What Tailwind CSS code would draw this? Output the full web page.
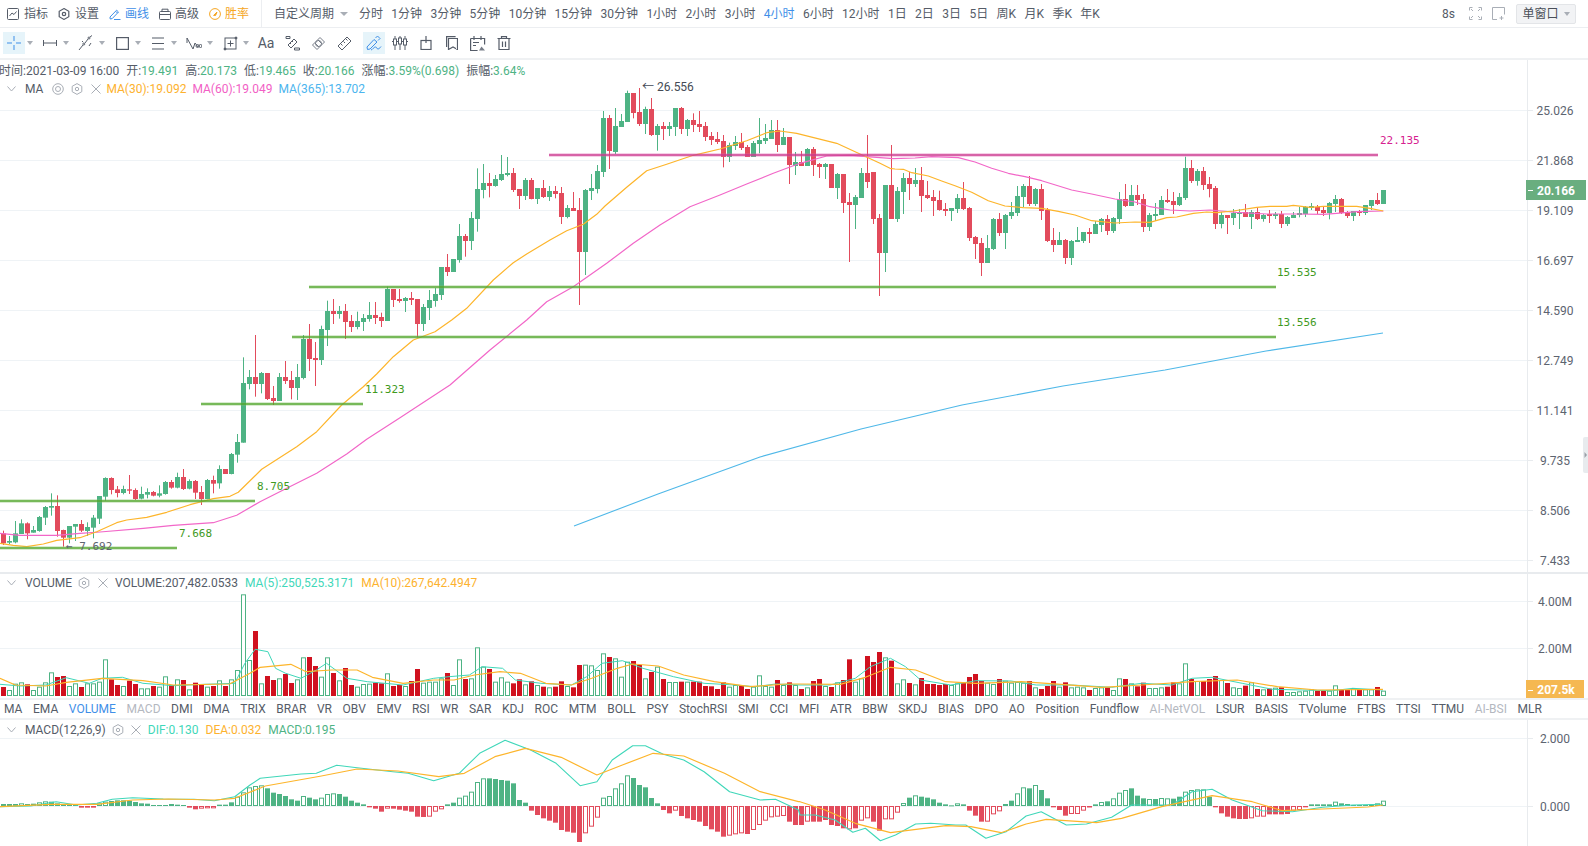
<!DOCTYPE html>
<html lang="zh">
<head>
<meta charset="UTF-8">
<title>K线图</title>
<script src="https://cdn.jsdelivr.net/npm/@tailwindcss/browser@4"></script>
</head>
<body class="bg-white">
<div class="w-[1588px] h-[846px] overflow-hidden flex flex-col text-xs text-[#555c68] font-[family-name:Roboto,'Noto_Sans_CJK_SC',sans-serif]">

  <!-- top bar -->
  <div class="h-[28px] shrink-0 flex items-center border-b border-[#eceef1] pl-[7px] pr-[12px]">
    <div class="flex items-center gap-[5px] mr-[10px]">
      <svg class="w-3 h-3" viewBox="0 0 12 12" fill="none" stroke="#555c68"><rect x=".5" y=".5" width="11" height="11" rx="1"/><path d="M2.5 8l2.5-3 2 1.5 2.5-3"/></svg>
      <span>指标</span>
    </div>
    <div class="flex items-center gap-[5px] mr-[10px]">
      <svg class="w-3 h-3" viewBox="0 0 12 12" fill="none" stroke="#555c68" stroke-width="1.2"><path d="M6 .6l4.8 2.7v5.4L6 11.4 1.2 8.7V3.3z"/><circle cx="6" cy="6" r="1.7"/></svg>
      <span>设置</span>
    </div>
    <div class="flex items-center gap-[4px] mr-[10px] text-[#3f8fe8]">
      <svg class="w-3 h-3" viewBox="0 0 12 12" fill="none" stroke="#3f8fe8"><path d="M1 9l.2 2 2-.4L9.5 4 7.6 2.2zM6.6 3.2l1.9 1.9M5 11.5h6.5"/></svg>
      <span>画线</span>
    </div>
    <div class="flex items-center gap-[4px] mr-[10px]">
      <svg class="w-3 h-3" viewBox="0 0 12 12" fill="none" stroke="#555c68"><rect x=".5" y="3.5" width="11" height="8" rx="1"/><path d="M3 3.5V1.2h6v2.3M.5 6.5h11"/></svg>
      <span>高级</span>
    </div>
    <div class="flex items-center gap-[4px] mr-[12px] text-[#f5a623]">
      <svg class="w-3 h-3" viewBox="0 0 12 12" fill="none" stroke="#f5a623"><circle cx="6" cy="6" r="5.4"/><path d="M4.6 7.4L8 4l-1.4 3.4z" fill="#f5a623"/></svg>
      <span>胜率</span>
    </div>
    <div class="h-[27px] border-l border-[#eceef1] pl-[12px] flex items-center gap-[8.4px]">
      <span>自定义周期</span>
      <span class="ml-[-2px] mr-[2px] w-0 h-0 border-x-[4px] border-x-transparent border-t-[4px] border-t-[#a9aeb6]"></span>
      <span>分时</span><span>1分钟</span><span>3分钟</span><span>5分钟</span><span>10分钟</span><span>15分钟</span><span>30分钟</span><span>1小时</span><span>2小时</span><span>3小时</span><span class="text-[#3f8fe8]">4小时</span><span>6小时</span><span>12小时</span><span>1日</span><span>2日</span><span>3日</span><span>5日</span><span>周K</span><span>月K</span><span>季K</span><span>年K</span>
    </div>
    <div class="ml-auto flex items-center">
      <span class="mr-[14px]">8s</span>
      <svg class="w-[13px] h-[13px] mr-[10px]" viewBox="0 0 13 13" fill="none" stroke="#a9aeb6"><path d="M.5 3.5v-3h3M9.5.5h3v3M12.5 9.5v3h-3M3.5 12.5h-3v-3M2 2l2 2M11 2L9 4M11 11L9 9M2 11l2-2"/></svg>
      <svg class="w-[13px] h-[13px] mr-[11px]" viewBox="0 0 13 13" fill="none" stroke="#a9aeb6"><path d="M5 12.5H.5V.5h12v7M9.5 9v4M7.5 11h4"/></svg>
      <div class="w-[60px] h-[20px] flex items-center justify-center gap-[5px] bg-[#f2f3f5] border border-[#e3e5e8] rounded-[2px] text-[#4a4f58]">
        <span>单窗口</span>
        <span class="w-0 h-0 border-x-[3px] border-x-transparent border-t-[4px] border-t-[#a9aeb6]"></span>
      </div>
    </div>
  </div>

  <!-- drawing tools -->
  <div class="h-[32px] shrink-0 flex items-center border-b-2 border-[#eff1f3] pl-[3px]">
    <div class="w-[22px] h-[22px] flex items-center justify-center bg-[#e6f4fa]">
      <svg class="w-[14px] h-[14px]" viewBox="0 0 14 14" fill="none" stroke="#3f8fe8"><path d="M7 0v5M7 9v5M0 7h5M9 7h5"/></svg>
    </div>
    <span class="ml-[2px] mr-[6px] w-0 h-0 border-x-[3px] border-x-transparent border-t-[4px] border-t-[#a9aeb6]"></span>
    <div class="w-[22px] h-[22px] flex items-center justify-center">
      <svg class="w-[14px] h-[14px]" viewBox="0 0 14 14" fill="none" stroke="#555c68"><path d="M.5 4v6M13.5 4v6M.5 7h13"/></svg>
    </div>
    <span class="ml-[2px] mr-[6px] w-0 h-0 border-x-[3px] border-x-transparent border-t-[4px] border-t-[#a9aeb6]"></span>
    <div class="w-[22px] h-[22px] flex items-center justify-center">
      <svg class="w-[16px] h-[16px]" viewBox="0 0 16 16" fill="none" stroke="#555c68"><path d="M1 15l4-5M7 8l3-4M12 2l2-1.5"/><circle cx="5.8" cy="9" r="1"/><circle cx="11" cy="3" r="1"/><path d="M4 7l1-1M11 11l2-3"/></svg>
    </div>
    <span class="ml-[2px] mr-[6px] w-0 h-0 border-x-[3px] border-x-transparent border-t-[4px] border-t-[#a9aeb6]"></span>
    <div class="w-[22px] h-[22px] flex items-center justify-center">
      <svg class="w-[13px] h-[13px]" viewBox="0 0 13 13" fill="none" stroke="#555c68" stroke-width="1.2"><rect x=".6" y=".6" width="11.8" height="11.8"/></svg>
    </div>
    <span class="ml-[2px] mr-[6px] w-0 h-0 border-x-[3px] border-x-transparent border-t-[4px] border-t-[#a9aeb6]"></span>
    <div class="w-[22px] h-[22px] flex items-center justify-center">
      <svg class="w-[14px] h-[13px]" viewBox="0 0 14 13" fill="none" stroke="#555c68" stroke-width="1.2"><path d="M1 1h12M1 6.500h12M1 12h12"/></svg>
    </div>
    <span class="ml-[2px] mr-[6px] w-0 h-0 border-x-[3px] border-x-transparent border-t-[4px] border-t-[#a9aeb6]"></span>
    <div class="w-[22px] h-[22px] flex items-center justify-center">
      <svg class="w-[16px] h-[13px]" viewBox="0 0 16 13" fill="none" stroke="#555c68"><path d="M1 1v5M1 1L7 12l2-6 3 4"/><circle cx="11.500" cy="9" r="1.500"/><circle cx="14.500" cy="9" r="1.500"/></svg>
    </div>
    <span class="ml-[2px] mr-[6px] w-0 h-0 border-x-[3px] border-x-transparent border-t-[4px] border-t-[#a9aeb6]"></span>
    <div class="w-[22px] h-[22px] flex items-center justify-center">
      <svg class="w-[15px] h-[15px]" viewBox="0 0 15 15" fill="none" stroke="#555c68"><rect x="2" y="2" width="11" height="11"/><path d="M7.500 4.500v6M4.500 7.500h6"/><circle cx="13" cy="2" r="1" fill="#555c68"/><circle cx="2" cy="13" r="1" fill="#555c68"/></svg>
    </div>
    <span class="ml-[2px] mr-[6px] w-0 h-0 border-x-[3px] border-x-transparent border-t-[4px] border-t-[#a9aeb6]"></span>
    <div class="w-[22px] h-[22px] flex items-center justify-center text-sm">Aa</div>
    <div class="ml-[4px] w-[22px] h-[22px] flex items-center justify-center">
      <svg class="w-[15px] h-[15px]" viewBox="0 0 15 15" fill="none" stroke="#555c68"><path d="M1 .5h4v2H1zM9.500 12h5v2h-5zM3 9l6-6 3 3-6 6zM5 7l1 1M7 5l1 1"/></svg>
    </div>
    <div class="ml-[4px] w-[22px] h-[22px] flex items-center justify-center">
      <svg class="w-[15px] h-[15px]" viewBox="0 0 15 15" fill="none" stroke="#777d88"><path d="M1.500 9l7.500-7.500 4.500 4.500L6 13.500zM4 7l4 4M7 4l4 4"/><circle cx="7.500" cy="7.500" r="3"/></svg>
    </div>
    <div class="ml-[4px] w-[22px] h-[22px] flex items-center justify-center">
      <svg class="w-[15px] h-[15px]" viewBox="0 0 15 15" fill="none" stroke="#555c68"><path d="M1 10l9-9 4 4-9 9zM4 8l1.500 1.500M6.500 5.500L8 7M9 3l1.500 1.500"/></svg>
    </div>
    <div class="ml-[8px] w-[22px] h-[22px] flex items-center justify-center bg-[#e6f4fa]">
      <svg class="w-[16px] h-[16px]" viewBox="0 0 16 16" fill="none" stroke="#3f8fe8"><path d="M1 12l.5 2.500 2.500-.5 7-7-3-2.500zM9.500 3l2-2 2.500 2.500-2 2M5 15c2-.5 2.500-3 4.500-3 1.500 0 1 2 2.500 2s2-1.500 3-2.500"/></svg>
    </div>
    <div class="ml-[4px] w-[22px] h-[22px] flex items-center justify-center">
      <svg class="w-[16px] h-[14px]" viewBox="0 0 16 14" fill="none" stroke="#555c68"><path d="M0 5.500h16M3 0v14M8 0v14M13 0v14"/><rect x="1.500" y="3" width="3" height="6" fill="#fff"/><rect x="6.500" y="2" width="3" height="6" fill="#fff"/><rect x="11.500" y="3" width="3" height="6" fill="#fff"/></svg>
    </div>
    <div class="ml-[4px] w-[22px] h-[22px] flex items-center justify-center">
      <svg class="w-[12px] h-[14px]" viewBox="0 0 12 14" fill="none" stroke="#555c68" stroke-width="1.2"><rect x="1" y="4.500" width="10" height="9"/><path d="M6 0v7"/></svg>
    </div>
    <div class="ml-[4px] w-[22px] h-[22px] flex items-center justify-center">
      <svg class="w-[12px] h-[14px]" viewBox="0 0 12 14" fill="none" stroke="#555c68" stroke-width="1.2"><path d="M2.500 2.500h9V13.500L7 11l-4.500 2.500zM2.500 2.500v11M.6 11V.6h9"/></svg>
    </div>
    <div class="ml-[4px] w-[22px] h-[22px] flex items-center justify-center">
      <svg class="w-[16px] h-[15px]" viewBox="0 0 16 15" fill="none" stroke="#555c68" stroke-width="1.2"><path d="M4 0v4M11 0v4M.6 2.500h14v6M.6 2.500v12h7M3 6.500h6M3 9.500h3"/><path d="M9 14.500l2.500-4 3.500 4z" fill="#777d88" stroke="none"/></svg>
    </div>
    <div class="ml-[4px] w-[22px] h-[22px] flex items-center justify-center">
      <svg class="w-[14px] h-[14px]" viewBox="0 0 14 14" fill="none" stroke="#555c68" stroke-width="1.2"><path d="M.5 2.500h13M4.500 2.500V.6h5v1.900M2 2.500v11h10v-11M5.500 5.500v5.500M8.500 5.500v5.500"/></svg>
    </div>
  </div>

  <!-- price chart -->
  <div class="relative h-[514px] shrink-0 border-b-2 border-[#e8ebee]">
    <svg id="main" class="block" width="1588" height="512"></svg>
    <div class="absolute left-[-1px] top-[2px] h-[18px] flex items-center whitespace-nowrap">
      <span>时间:2021-03-09 16:00</span>
      <span class="ml-[7px]">开:<span class="text-[#4eb384]">19.491</span></span>
      <span class="ml-[7px]">高:<span class="text-[#4eb384]">20.173</span></span>
      <span class="ml-[7px]">低:<span class="text-[#4eb384]">19.465</span></span>
      <span class="ml-[7px]">收:<span class="text-[#4eb384]">20.166</span></span>
      <span class="ml-[7px]">涨幅:<span class="text-[#4eb384]">3.59%(0.698)</span></span>
      <span class="ml-[7px]">振幅:<span class="text-[#4eb384]">3.64%</span></span>
    </div>
    <div class="absolute left-[7px] top-[20px] h-[18px] flex items-center whitespace-nowrap">
      <svg class="w-[9px] h-[6px] mr-[9px]" viewBox="0 0 9 6" fill="none" stroke="#a9aeb6"><path d="M.5.500l4 4.500 4-4.500"/></svg>
      <span>MA</span>
      <svg class="w-3 h-3 ml-[9px]" viewBox="0 0 12 12" fill="none" stroke="#a9aeb6"><circle cx="6" cy="6" r="5.300"/><circle cx="6" cy="6" r="2.500"/></svg>
      <svg class="w-3 h-3 ml-[7px]" viewBox="0 0 12 12" fill="none" stroke="#a9aeb6"><path d="M6 .6l4.800 2.700v5.400L6 11.400 1.200 8.700V3.300z"/><circle cx="6" cy="6" r="1.700"/></svg>
      <svg class="w-[10px] h-[10px] ml-[8px]" viewBox="0 0 10 10" fill="none" stroke="#a9aeb6"><path d="M.5.500l9 9M9.500.500l-9 9"/></svg>
      <span class="ml-[5px] text-[#fdb22e]">MA(30):19.092</span>
      <span class="ml-[6px] text-[#f25fc5]">MA(60):19.049</span>
      <span class="ml-[6px] text-[#4cb5ee]">MA(365):13.702</span>
    </div>
  </div>

  <!-- volume -->
  <div class="relative h-[124px] shrink-0">
    <svg id="volume" class="block" width="1588" height="124"></svg>
    <div class="absolute left-[7px] top-0 h-[18px] flex items-center whitespace-nowrap">
      <svg class="w-[9px] h-[6px] mr-[9px]" viewBox="0 0 9 6" fill="none" stroke="#a9aeb6"><path d="M.5.500l4 4.500 4-4.500"/></svg>
      <span>VOLUME</span>
      <svg class="w-3 h-3 ml-[6px]" viewBox="0 0 12 12" fill="none" stroke="#a9aeb6"><path d="M6 .6l4.800 2.700v5.400L6 11.400 1.200 8.700V3.300z"/><circle cx="6" cy="6" r="1.700"/></svg>
      <svg class="w-[10px] h-[10px] ml-[8px]" viewBox="0 0 10 10" fill="none" stroke="#a9aeb6"><path d="M.5.500l9 9M9.500.500l-9 9"/></svg>
      <span class="ml-[7px]">VOLUME:207,482.0533</span>
      <span class="ml-[7px] text-[#3fd7b9]">MA(5):250,525.3171</span>
      <span class="ml-[7px] text-[#fdb22e]">MA(10):267,642.4947</span>
    </div>
  </div>

  <!-- indicator tabs -->
  <div class="h-[22px] shrink-0 flex items-center gap-[10.6px] pl-[4px] border-y-2 border-[#eff1f3] whitespace-nowrap">
    <span>MA</span><span>EMA</span><span class="text-[#3f8fe8]">VOLUME</span><span class="text-[#b4b8bf]">MACD</span><span>DMI</span><span>DMA</span><span>TRIX</span><span>BRAR</span><span>VR</span><span>OBV</span><span>EMV</span><span>RSI</span><span>WR</span><span>SAR</span><span>KDJ</span><span>ROC</span><span>MTM</span><span>BOLL</span><span>PSY</span><span>StochRSI</span><span>SMI</span><span>CCI</span><span>MFI</span><span>ATR</span><span>BBW</span><span>SKDJ</span><span>BIAS</span><span>DPO</span><span>AO</span><span>Position</span><span>Fundflow</span><span class="text-[#b4b8bf]">AI-NetVOL</span><span>LSUR</span><span>BASIS</span><span>TVolume</span><span>FTBS</span><span>TTSI</span><span>TTMU</span><span class="text-[#b4b8bf]">AI-BSI</span><span>MLR</span>
  </div>

  <!-- macd -->
  <div class="relative flex-1">
    <svg id="macd" class="block" width="1588" height="126"></svg>
    <div class="absolute left-[7px] top-0 h-[20px] flex items-center whitespace-nowrap">
      <svg class="w-[9px] h-[6px] mr-[9px]" viewBox="0 0 9 6" fill="none" stroke="#a9aeb6"><path d="M.5.500l4 4.500 4-4.500"/></svg>
      <span>MACD(12,26,9)</span>
      <svg class="w-3 h-3 ml-[6px]" viewBox="0 0 12 12" fill="none" stroke="#a9aeb6"><path d="M6 .6l4.800 2.700v5.400L6 11.400 1.200 8.700V3.300z"/><circle cx="6" cy="6" r="1.700"/></svg>
      <svg class="w-[10px] h-[10px] ml-[7px]" viewBox="0 0 10 10" fill="none" stroke="#a9aeb6"><path d="M.5.500l9 9M9.500.500l-9 9"/></svg>
      <span class="ml-[7px] text-[#3fd7b9]">DIF:0.130</span>
      <span class="ml-[7px] text-[#fdb22e]">DEA:0.032</span>
      <span class="ml-[7px] text-[#4eb384]">MACD:0.195</span>
    </div>
  </div>
</div>

<script>
  const GREEN = '#4eb384', RED = '#e24b5c', VOLRED = '#d0111f';
  const GRID = '#eff3f6', AXIS = '#e8ebee', LABEL = '#5d6470';

  // candles: [red?, bodyTop, bodyBottom, wickTop, wickBottom], read off at 3x from a given y offset
  const candleSegs = [
    [380, [[1,460,490,452,495],[0,483,488,468,492],[0,460,487,423,490],[0,430,462,418,462],[1,430,460,427,478],[0,450,458,438,458],[0,411,453,408,455],[0,381,413,378,435],[0,378,383,340,407],[1,378,453,346,470],
      [1,450,473,449,500],[0,438,473,438,490],[0,432,440,432,483],[1,432,452,420,456],[0,441,453,427,468],[0,413,443,405,475],[0,348,416,348,432],[0,294,350,292,362],[1,294,330,292,343],[1,328,339,318,352],
      [0,327,339,317,343],[1,328,332,285,342],[1,330,357,325,360],[0,342,356,320,358],[0,336,344,325,355],[1,336,347,333,349],[0,340,347,316,352],[0,306,342,303,344],[1,306,323,300,326],[0,291,323,278,325],
      [1,291,327,267,330],[0,303,326,298,328],[1,303,338,300,357],[1,336,357,318,375],[0,300,357,297,358],[1,300,311,287,340],[0,267,310,256,326],[1,267,282,267,282],[0,222,282,219,283],[0,186,224,162,248]]],
    [280, [[0,309,488,232,488],[0,291,312,270,328],[1,291,312,165,350],[0,279,312,276,340],[1,279,357,279,360],[1,354,363,318,375],[0,291,363,279,363],[1,291,303,243,312],[1,300,324,273,358],[0,291,324,252,360],
      [0,177,294,165,298],[1,177,237,132,273],[1,234,240,186,318],[0,147,240,137,255],[0,93,150,62,198],[1,93,102,57,132],[0,93,102,78,116],[1,93,126,72,177],[1,123,141,105,156],[0,123,141,95,148],
      [0,114,126,102,153],[0,105,117,66,125],[1,105,114,66,132],[1,111,123,98,141],[0,27,123,20,123],[1,27,60,27,81],[1,57,63,27,68],[0,54,63,51,96],[1,54,60,36,75],[1,57,132,57,172],
      [0,81,132,72,153],[0,60,84,30,120],[0,42,63,24,80]]],
    [80, [[0,561,645,561,660],[1,561,576,522,588],[0,537,576,537,576],[0,468,540,432,548],[1,468,483,462,530],[0,414,483,396,510],[0,327,417,265,455],[0,309,330,252,355],[1,309,318,279,352],[0,297,318,285,320],
      [0,282,300,225,303],[0,279,285,231,289],[1,279,330,264,336],[1,327,348,327,387],[0,300,348,294,360],[1,300,357,294,358],[0,324,357,324,372],[1,324,351,300,354],[0,333,351,318,363],[1,333,342,318,355],
      [1,339,411,321,432],[0,384,411,375,415],[1,384,393,336,393],[1,390,516,354,675],[0,330,516,327,585],[0,324,333,282,360],[0,273,327,255,340],[0,114,276,93,291],[1,114,213,105,267],[0,138,216,84,222],
      [0,123,141,102,141],[0,39,126,32,126],[1,39,99,39,115],[1,96,132,24,138],[0,87,132,80,162],[1,87,165,54,168],[0,138,165,132,212],[1,138,147,126,180],[0,138,147,126,168],[0,84,141,84,168],
      [1,84,147,81,162],[0,120,147,117,168],[1,120,135,100,156],[1,132,141,93,156],[1,138,171,126,183],[1,168,180,156,195],[1,177,186,156,192],[1,183,231,165,262],[0,195,231,188,246],[0,186,198,168,210],
      [1,186,204,159,210],[1,201,231,195,231],[0,189,231,183,231],[0,180,192,114,220],[0,174,183,132,192],[0,150,177,120,177],[1,150,195,120,216],[0,171,195,144,195],[1,171,255,171,312],[0,246,258,216,285],
      [1,246,258,213,258],[0,207,258,204,258],[1,207,255,201,288],[1,252,261,249,294],[0,252,261,249,297],[1,252,324,252,324],[0,282,324,279,357],[1,282,369,282,399],[1,366,375,339,546],[0,351,375,345,447],
      [0,279,354,264,354],[1,279,306,165,324],[1,276,417,276,432],[1,414,519,402,648],[0,315,519,315,576],[1,315,417,195,417],[0,333,417,321,426]]],
    [150, [[0,84,126,69,192],[1,84,102,66,150],[0,90,102,54,111],[1,90,138,51,186],[1,135,144,93,147],[1,141,153,120,198],[1,150,180,122,182],[1,177,183,159,198],[0,174,183,174,213],[0,144,177,132,189],
      [1,144,177,96,180],[1,174,264,171,273],[1,261,282,258,327],[1,279,339,264,378],[0,294,339,255,339],[0,207,297,204,300],[1,207,249,189,258],[0,195,249,192,297],[0,186,198,156,207],[0,138,189,108,198],
      [0,108,141,102,171],[1,108,162,78,168],[0,117,162,114,168],[1,117,183,102,210],[1,180,273,174,276],[1,270,285,234,306],[0,270,285,246,285],[1,270,324,267,342],[0,273,324,270,345],[0,270,276,231,276],
      [0,246,273,246,279],[1,246,252,234,279],[0,222,252,213,252],[0,207,225,204,246],[1,207,243,195,255],[0,204,243,201,249],[0,147,207,126,222],[1,147,168,102,171],[0,135,168,105,168],[1,135,150,105,165],
      [1,147,231,132,246],[0,195,231,189,243],[0,192,198,159,213],[0,150,195,138,195],[1,150,156,117,159],[1,153,165,126,192],[0,141,165,129,168],[0,54,144,20,150],[1,54,93,30,99],[0,63,93,57,107],
      [1,63,105,51,120],[1,102,117,81,142],[1,114,222,108,237],[0,195,222,186,235],[1,195,204,195,252],[0,189,204,177,225],[0,186,192,177,237],[1,186,201,162,201],[0,186,201,180,237],[1,186,207,174,210],
      [0,195,207,192,215],[1,192,198,180,219],[0,192,198,186,207],[1,192,222,183,234],[0,201,222,198,228],[0,195,204,186,204],[0,189,195,171,202],[0,171,192,168,201],[0,168,174,159,180],[1,171,183,165,192],
      [1,180,189,168,198],[0,159,189,156,208],[0,147,162,135,186],[1,147,189,144,192],[1,186,198,183,204],[0,183,198,183,213],[1,183,189,180,198],[0,165,189,165,195],[0,150,168,150,180],[1,150,162,129,165],
      [0,120,162,120,162]]],
  ];
  const candles = candleSegs.flatMap(([off, rows]) => rows.map(r => ({
    red: r[0], top: off + r[1] / 3, bot: off + r[2] / 3, hi: off + r[3] / 3, lo: off + r[4] / 3,
  })));

  // volume bar tops, in 3x crop units from y=570
  const volTops = [351,360,341,337,343,360,350,337,307,321, 318,348,340,351,340,340,335,268,328,345, 348,332,342,355,355,348,350,319,345,328,
    330,358,338,342,350,348,331,348,328,300, 73,270,183,340,318,330,325,312,339,328, 262,261,288,320,262,309,331,294,345,350,
    342,341,338,340,310,348,345,348,333,297, 338,335,335,325,309,345,268,327,325,232, 290,297,335,322,335,340,328,343,334,345,
    350,352,350,334,348,352,285,284,286,300, 250,261,265,320,275,273,285,325,306,290, 327,336,336,335,335,335,335,348,349,357,
    337,350,345,348,357,350,316,348,350,330, 345,337,345,357,352,333,327,348,351,337, 330,268,335,325,258,276,246,262,272,340,
    328,339,343,324,342,342,345,342,345,340, 337,321,312,333,338,342,327,332,338,336, 338,333,352,357,348,333,350,337,352,350,
    352,360,354,352,352,360,325,327,340,349, 338,354,354,352,350,337,340,280,327,333, 333,327,318,330,339,352,354,347,337,357,
    358,356,353,352,366,366,364,362,358,362, 362,362,346,360,360,354,358,358,358,351, 362];

  // macd bar ends, same crop units, zero line at 708; negative value = hollow bar
  const macdEnds = [702,702,702,-700,702,701,-697,-694,695,700, 705,705,705,713,713,713,-700,-695,693,691, 691,692,696,700,701,705,705,705,702,704,
    705,713,718,-716,-715,-715,704,704,697,-680, -667,-652,-648,-646,655,668,672,678,688,692, -678,683,688,-683,-672,-670,672,680,692,698,
    703,712,716,725,-716,716,719,722,725,740, 741,-740,-725,-718,703,698,-683,-677,-665,-636, -625,625,627,630,632,640,690,698,722,735,
    745,752,758,780,785,788,816,-790,-770,-743, -683,-678,-655,-640,-616,624,645,652,684,700, 720,730,-722,738,745,750,755,768,778,785,
    800,-797,-793,-790,792,-780,-765,-752,-742,-740, -738,755,765,765,-755,755,755,750,765,768, 775,-778,775,-752,-745,755,782,-748,-748,-728,
    -699,683,-676,680,683,688,698,703,706,-700, 703,722,737,755,-755,-733,-724,702,692,-670, -652,655,-645,660,685,712,720,737,-732,-732,
    -722,-712,703,-696,694,-685,-668,-660,655,677, 685,-687,687,-684,-685,686,680,-665,-660,-658, -658,680,712,730,740,745,747,747,-745,-740,
    -740,733,733,733,732,-722,-720,712,-703,703, 703,703,-695,700,702,705,705,705,703,-700, -692];

  // crop coordinates -> page coordinates
  const crop = (x0, sx, y0, sy, pts) => pts.map(([x, y]) => [x0 + x / sx, y0 + y / sy]);
  const line = (pts, color, w) => `<polyline fill="none" stroke="${color}" stroke-width="${w}" stroke-linejoin="round" points="${pts.map(p => p[0].toFixed(1) + ',' + p[1].toFixed(1)).join(' ')}"/>`;
  const hline = (x1, x2, y, halo, core) => `<rect x="${x1}" y="${y - 1.5}" width="${x2 - x1}" height="3" fill="${halo}" opacity=".6"/><rect x="${x1}" y="${y - .5}" width="${x2 - x1}" height="1" fill="${core}"/>`;
  const axisLabel = (y, t) => `<rect x="1527" y="${y}" width="6" height="1" fill="${AXIS}"/><text x="1555" y="${y + 4.500}" font-size="12" text-anchor="middle" fill="${LABEL}">${t}</text>`;
  const grid = (y) => `<rect x="0" y="${y}" width="1527" height="1" fill="${GRID}"/>`;
  const mono = (x, y, t, color) => `<text x="${x}" y="${y + 4}" font-size="11" font-family="DejaVu Sans Mono" fill="${color}">${t}</text>`;

  const ma30 = [
    ...crop(0, 3, 380, 3, [[0,490],[40,496],[80,500],[130,492],[170,481],[240,473],[290,455],[350,428],[380,420],[440,412],[500,397],[570,374],[640,356],[690,349],[715,337],[785,268]]),
    ...crop(150, 3, 280, 3, [[440,500],[500,455],[575,375],[640,320],[680,282],[730,230],[790,180],[855,155]]),
    ...crop(400, 3, 80, 3, [[155,720],[200,685],[280,600],[340,548],[380,522],[450,480],[500,452],[550,433],[590,403],[615,378],[680,322],[740,272],[800,253],[880,226],[960,207],[1040,182],[1100,158],[1140,153],[1190,160],[1250,175],[1310,190],[1380,222],[1440,250],[1470,265]]),
    ...crop(895, 3, 150, 3, [[0,57],[25,58],[50,68],[100,78],[140,93],[180,107],[230,127],[280,152],[330,168],[385,173],[440,175],[490,184],[540,195],[590,212],[660,219],[720,216]]),
    ...crop(1150, 3, 150, 3, [[0,217],[50,203],[80,201],[130,190],[170,186],[200,188],[250,183],[320,172],[360,169],[410,169],[430,166],[480,172],[520,169],[620,169],[660,175],[700,183]]),
  ];
  const ma60 = [
    ...crop(0, 3, 380, 3, [[0,460],[60,466],[170,466],[240,460],[300,456],[430,445],[520,436],[640,428],[710,406],[780,365],[860,325],[950,280],[1040,222],[1100,178],[1200,113]]),
    [450,385],[490,350],
    ...crop(400, 3, 80, 3, [[380,720],[440,665],[520,620],[620,550],[700,490],[780,435],[870,380],[960,345],[1040,312],[1120,280],[1200,250],[1280,228],[1350,226],[1480,236]]),
    ...crop(895, 3, 150, 3, [[60,24],[110,20],[190,23],[240,36],[290,55],[340,70],[390,80],[440,92],[530,120],[590,132],[660,147],[720,156]]),
    ...crop(1150, 3, 150, 3, [[0,170],[60,180],[120,183],[180,180],[260,187],[350,192],[440,192],[520,193],[560,190],[620,185],[700,183]]),
  ];
  const ma365 = [[574,526],[658,494],[760,457],[861,429],[962,405],[1063,386],[1165,370],[1266,351],[1383,333]];

  // price pane
  {
    let s = '<g transform="translate(0,-60)">';
    [[110,'25.026'],[160,'21.868'],[210,'19.109'],[260,'16.697'],[310,'14.590'],[360,'12.749'],[410,'11.141'],[460,'9.735'],[510,'8.506'],[560,'7.433']].forEach(([y, t]) => {
      s += grid(y) + axisLabel(y, t);
    });
    s += `<rect x="1527" y="60" width="1" height="514" fill="${AXIS}"/>`;
    s += `<text x="13" y="580" font-size="11" font-family="DejaVu Sans Mono" fill="#3f9a1e">6.911</text>`;
    candles.forEach((c, i) => {
      const color = c.red ? RED : GREEN;
      s += `<rect x="${3 + 6 * i}" y="${c.hi}" width="1" height="${c.lo - c.hi}" fill="${color}"/>`;
      s += `<rect x="${1 + 6 * i}" y="${c.top}" width="5" height="${Math.max(c.bot - c.top, 1)}" fill="${color}"/>`;
    });
    s += line(ma365, '#4fb8e8', 1.1) + line(ma60, '#f267c8', 1.2) + line(ma30, '#fdb52b', 1.2);
    const gh = '#7fbe62', gc = '#3c9a12';
    s += hline(0, 177, 548, gh, gc) + hline(0, 255, 501, gh, gc) + hline(201, 363, 404, gh, gc) + hline(292, 1276, 337, gh, gc) + hline(309, 1276, 287, gh, gc);
    s += hline(549, 1378, 155, '#e066b0', '#c2257f');
    s += mono(1380, 140, '22.135', '#d6218f') + mono(1277, 272, '15.535', '#3f9a1e') + mono(1277, 322, '13.556', '#3f9a1e');
    s += mono(365, 389, '11.323', '#3f9a1e') + mono(257, 486, '8.705', '#3f9a1e') + mono(179, 533, '7.668', '#3f9a1e');
    s += `<text x="66" y="550" font-size="11" font-family="DejaVu Sans Mono" fill="${LABEL}">← 7.692</text>`;
    s += `<text x="642" y="91" font-size="12" fill="#444a55">← 26.556</text>`;
    s += `<rect x="1526" y="180" width="60" height="20" fill="#69ae7f"/><rect x="1528" y="190" width="5" height="1" fill="#fff"/><text x="1556" y="194.500" font-size="12" font-weight="700" text-anchor="middle" fill="#fff">20.166</text>`;
    s += `<path d="M1588 437h-3a2 2 0 0 0-2 2v32a2 2 0 0 0 2 2h3z" fill="#e8ebee"/><path d="M1584.500 452l2.500 3-2.500 3z" fill="#9aa0a8"/>`;
    document.getElementById('main').innerHTML = s + '</g>';
  }

  // volume pane
  {
    let s = '<g transform="translate(0,-574)">';
    s += grid(601) + axisLabel(601, '4.00M') + grid(648) + axisLabel(648, '2.00M');
    s += `<rect x="1527" y="574" width="1" height="124" fill="${AXIS}"/>`;
    volTops.forEach((t, i) => {
      const y = 570 + t / 3, h = 696 - y, c = candles[i];
      if (c && c.red) s += `<rect x="${1 + 6 * i}" y="${y}" width="5" height="${h}" fill="${VOLRED}"/>`;
      else s += `<rect x="${1.5 + 6 * i}" y="${y + .5}" width="4" height="${h - 1}" fill="#fff" stroke="${GREEN}"/>`;
    });
    const ma5 = [...crop(0, 1.96, 570, 3, [[0,343],[40,348],[90,345],[130,323],[175,340],[200,325],[240,322],[280,340],[340,347],[400,343],[460,340],[480,280],[500,238],[525,245],[540,295],[560,310],[590,325],[620,300],[640,280],[680,325],[720,335],[790,345],[850,325],[880,320],[920,315],[945,290],[985,295],[1010,330],[1060,340],[1120,345],[1150,320],[1180,280],[1220,272],[1260,295],[1320,320],[1380,340],[1440,345],[1480,350],[1520,342]]),
      ...crop(800, 1.99, 570, 3, [[0,345],[60,345],[110,325],[140,290],[180,265],[210,290],[240,330],[300,345],[350,332],[420,333],[470,345],[540,345],[620,352],[680,340],[740,345],[780,325],[820,322],[880,340],[940,358],[1000,360],[1060,362],[1100,355],[1160,360]])];
    const ma10 = [...crop(0, 1.96, 570, 3, [[0,325],[30,345],[90,348],[130,337],[200,325],[280,332],[340,345],[450,342],[490,310],[510,292],[570,283],[600,305],[650,300],[700,300],[730,322],[790,340],[850,330],[890,330],[930,315],[980,305],[1020,310],[1070,340],[1120,345],[1160,325],[1210,295],[1240,282],[1290,288],[1340,315],[1400,335],[1470,350],[1540,342]]),
      ...crop(800, 1.99, 570, 3, [[0,342],[80,343],[130,322],[180,292],[230,300],[290,335],[350,340],[440,335],[520,343],[600,352],[680,345],[780,335],[870,330],[950,350],[1030,360],[1160,358]])];
    s += line(ma5, '#3fd7b9', 1) + line(ma10, '#fdb52b', 1.2);
    s += `<rect x="1526" y="680" width="58" height="18" fill="#f5b851"/><rect x="1528" y="690" width="5" height="1" fill="#fff"/><text x="1556" y="694" font-size="12" font-weight="700" text-anchor="middle" fill="#fff">207.5k</text>`;
    document.getElementById('volume').innerHTML = s + '</g>';
  }

  // macd pane
  {
    let s = '<g transform="translate(0,-720)">';
    s += grid(738) + axisLabel(738, '2.000') + grid(806) + axisLabel(806, '0.000');
    s += `<rect x="1527" y="720" width="1" height="126" fill="${AXIS}"/>`;
    macdEnds.forEach((e, i) => {
      const hollow = e < 0, end = 570 + Math.abs(e) / 3, color = Math.abs(e) < 708 ? GREEN : RED;
      const y = Math.min(end, 806), h = Math.max(Math.abs(end - 806), 1);
      if (hollow) s += `<rect x="${1.5 + 6 * i}" y="${y + .5}" width="4" height="${Math.max(h - 1, .5)}" fill="#fff" stroke="${color}"/>`;
      else s += `<rect x="${1 + 6 * i}" y="${y}" width="5" height="${h}" fill="${color}"/>`;
    });
    const dif = [...crop(0, 1.96, 570, 3, [[0,710],[60,708],[110,695],[150,705],[190,700],[220,688],[260,683],[320,687],[380,688],[420,692],[460,680],[490,645],[510,625],[590,612],[620,610],[660,586],[700,593],[770,605],[800,610],[850,632],[900,610],[940,550],[990,511],[1040,540],[1090,580],[1137,647],[1170,635],[1200,570],[1240,527],[1265,527],[1300,553],[1340,570],[1380,605],[1430,665],[1490,690],[1520,688],[1565,720]]),
      ...crop(800, 1.99, 570, 3, [[0,735],[30,735],[70,750],[105,787],[130,775],[160,812],[190,795],[230,762],[260,760],[310,765],[330,765],[370,805],[410,785],[450,738],[480,725],[530,765],[570,762],[620,742],[660,705],[740,705],[780,665],[820,658],[860,690],[920,722],[980,725],[1040,712],[1100,705],[1160,703]])];
    const dea = [...crop(0, 1.96, 570, 3, [[0,710],[100,703],[190,703],[260,690],[330,687],[420,690],[460,685],[520,648],[630,618],[700,597],[780,603],[860,620],[910,610],[970,560],[1030,535],[1100,562],[1170,615],[1220,585],[1280,550],[1340,558],[1420,610],[1490,665],[1565,695]]),
      ...crop(800, 1.99, 570, 3, [[0,695],[50,720],[110,760],[180,788],[290,767],[340,770],[400,788],[450,762],[490,748],[590,758],[640,745],[720,710],[820,677],[900,695],[960,722],[1040,717],[1130,711],[1160,705]])];
    s += line(dif, '#3fd7b9', 1.1) + line(dea, '#fdb52b', 1.2);
    document.getElementById('macd').innerHTML = s + '</g>';
  }
</script>
</body>
</html>
